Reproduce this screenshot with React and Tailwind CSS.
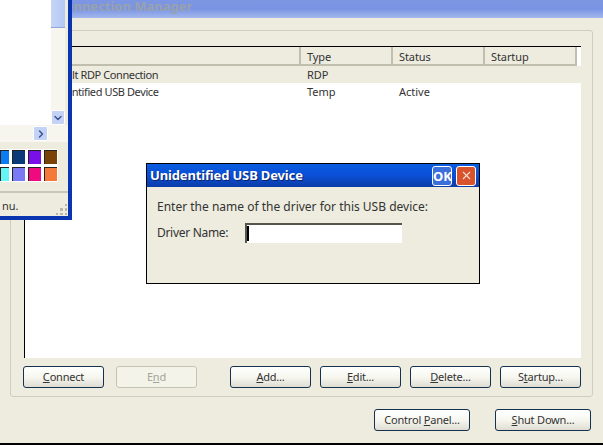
import { ChevronDown, ChevronRight, X } from 'lucide-react';

const FONT = "font-['Noto_Sans','DejaVu_Sans',sans-serif]";

function XpButton({ children, className = '', disabled }) {
  const look = disabled
    ? 'border-[#c4c3b4] bg-[#f4f3ea] text-[#a5a498]'
    : 'border-[#14324f] bg-gradient-to-b from-white via-[#f7f7f0] to-[#dfddd3] text-[#333]';
  return (
    <button type="button" disabled={disabled} className={`h-[22px] pb-[2px] rounded-[3px] border text-[11px] tracking-[-0.2px] leading-none ${look} ${className}`}>
      {children}
    </button>
  );
}

function HeaderCell({ children }) {
  return (
    <div className="h-[19px] pl-[6px] bg-[#edecdf] border-r-2 border-b-2 border-r-[#c0bfae] border-b-[#c0bfae] text-[11px] tracking-[-0.1px] leading-[19px] text-[#333]">
      {children}
    </div>
  );
}

function Row({ cells, className = '' }) {
  return (
    <div className={`grid grid-cols-[276px_92px_92px_92px_1fr] h-[17px] text-[11px] leading-[18px] text-[#333] ${className}`}>
      <div className="pl-[18px] tracking-[-0.4px]">{cells[0]}</div>
      <div className="pl-[6px]">{cells[1]}</div>
      <div className="pl-[6px]">{cells[2]}</div>
      <div />
    </div>
  );
}

function SideWindow() {
  const swatches = [
    ['bg-[#0a7df5] w-[9px]', 'bg-[#0a3a78] w-[13px]', 'bg-[#7a10e8] w-[13px]', 'bg-[#7a4208] w-[13px]'],
    ['bg-[#66f5f5] w-[9px]', 'bg-[#7a7af5] w-[13px]', 'bg-[#f00a80] w-[13px]', 'bg-[#f57a3a] w-[13px]'],
  ];
  return (
    <div className="absolute left-0 top-0 w-[72px] h-[220px] flex flex-col bg-[#edecdf] border-r-4 border-b-4 border-[#0a35b0]">
      <div className="h-[125px] flex bg-white shrink-0">
        <div className="w-[51px]" />
        <div className="w-[14px] flex flex-col bg-[#f6f6ee]">
          <div className="h-[28px] bg-gradient-to-r from-[#c6d5f7] to-[#b4c8f4] border-b border-[#8ea6dc]" />
          <div className="flex-1" />
          <div className="h-[15px] flex items-center justify-center rounded-[2px] bg-[#c3d2f5] border border-white">
            <ChevronDown size={12} strokeWidth={3} className="text-[#3d5590]" />
          </div>
        </div>
        <div className="w-[3px] bg-[#edecdf]" />
      </div>
      <div className="h-[17px] flex items-center bg-[#f6f6ee] shrink-0">
        <div className="w-[33px]" />
        <div className="w-[15px] h-[15px] flex items-center justify-center rounded-[2px] bg-[#c3d2f5] border border-white">
          <ChevronRight size={12} strokeWidth={3} className="text-[#3d5590]" />
        </div>
      </div>
      <div className="pt-[7px] shrink-0">
        <div className="w-[58px] bg-white flex flex-col gap-[3px] py-[1px]">
          {swatches.map((row, i) => (
            <div key={i} className="flex gap-[3px] h-[14px]">
              {row.map((c) => <div key={c} className={`${c} border-t border-l border-[#222]`} />)}
            </div>
          ))}
        </div>
      </div>
      <div className="mt-[9px] border-t-2 border-[#c8c7b6] relative flex-1 overflow-hidden">
        <div className="absolute left-[2px] top-[5px] text-[11px] leading-[16px] text-[#333]">nu.</div>
        <div className="absolute right-[1px] bottom-[1px] w-[11px] h-[11px] grid grid-cols-3 gap-[2px]">
          <span /><span /><span className="bg-[#b9b8a8]" />
          <span /><span className="bg-[#b9b8a8]" /><span className="bg-[#b9b8a8]" />
          <span className="bg-[#b9b8a8]" /><span className="bg-[#b9b8a8]" /><span className="bg-[#b9b8a8]" />
        </div>
      </div>
    </div>
  );
}

function DriverDialog() {
  return (
    <div className="absolute left-[146px] top-[163px] w-[334px] h-[121px] border border-black bg-[#edecdf] flex flex-col">
      <div className="h-[23px] flex items-center bg-gradient-to-b from-[#0a5ce0] via-[#0a4fd6] to-[#0a3ca8] pl-[3px] pr-[3px] shrink-0">
        <span className="font-bold text-[13px] tracking-[-0.15px] text-white [text-shadow:1px_1px_0_#0a2468]">Unidentified USB Device</span>
        <div className="ml-auto flex gap-[4px]">
          <div className="w-[20px] h-[20px] rounded-[3px] border border-white bg-[#3a6fdc] text-white text-[13px] font-bold leading-[18px] text-center">OK</div>
          <div className="w-[20px] h-[20px] rounded-[3px] border border-white bg-[#d8532c] flex items-center justify-center">
            <X size={13} strokeWidth={2} className="text-[#f8e0d8]" />
          </div>
        </div>
      </div>
      <div className="px-[10px] pt-[12px] text-[12px] text-[#333]">
        <div className="leading-[16px]">Enter the name of the driver for this USB device:</div>
        <div className="flex items-center mt-[8px]">
          <span className="w-[88px] leading-[16px] tracking-[-0.3px] -mt-[1px]">Driver Name:</span>
          <div className="w-[157px] h-[20px] bg-white border-t-2 border-l-2 border-t-[#55554c] border-l-[#55554c] flex">
            <div className="w-[2px] h-[15px] mt-[1px] bg-black" />
          </div>
        </div>
      </div>
    </div>
  );
}

export default function App() {
  return (
    <div className={`relative w-[603px] h-[445px] overflow-hidden bg-[#edecdf] ${FONT}`}>
      <div className="h-[18px] bg-gradient-to-b from-[#7e96e2] via-[#7a94e4] to-[#a4b8ec] pl-[57px] text-[13px] font-bold leading-[13px] text-[#98a2ae]">
        Connection Manager
      </div>

      <div className="relative mx-[10px] mt-[12px] h-[367px] border border-[#cfcebd] rounded-[3px] pl-[13px] pt-[15px]">
        <div className="absolute left-[-10px] top-[-9px] bg-[#edecdf] text-[12px] tracking-[-0.2px] leading-[16px] text-[#333]">Connections:</div>
        <div className="w-[557px] h-[312px] bg-white border-t border-l border-black">
          <div className="grid grid-cols-[276px_92px_92px_92px_1fr]">
            <HeaderCell />
            <HeaderCell>Type</HeaderCell>
            <HeaderCell>Status</HeaderCell>
            <HeaderCell>Startup</HeaderCell>
          </div>
          <Row cells={['Default RDP Connection', 'RDP', '']} className="bg-[#edecdf]" />
          <Row cells={['Unidentified USB Device', 'Temp', 'Active']} />
        </div>
        <div className="flex mt-[8px] -ml-[1px]">
          <XpButton className="w-[81px]"><u>C</u>onnect</XpButton>
          <XpButton disabled className="w-[81px] ml-[12px]">E<u>n</u>d</XpButton>
          <XpButton className="w-[81px] ml-[33px]"><u>A</u>dd...</XpButton>
          <XpButton className="w-[81px] ml-[9px]"><u>E</u>dit...</XpButton>
          <XpButton className="w-[81px] ml-[9px]"><u>D</u>elete...</XpButton>
          <XpButton className="w-[81px] ml-[9px]">S<u>t</u>artup...</XpButton>
        </div>
      </div>

      <div className="flex justify-end gap-[25px] pr-[12px] mt-[12px]">
        <XpButton className="w-[96px]">Control <u>P</u>anel...</XpButton>
        <XpButton className="w-[96px]"><u>S</u>hut Down...</XpButton>
      </div>

      <div className="absolute left-0 right-0 bottom-0 h-[2px] bg-black" />

      <SideWindow />
      <DriverDialog />
    </div>
  );
}
